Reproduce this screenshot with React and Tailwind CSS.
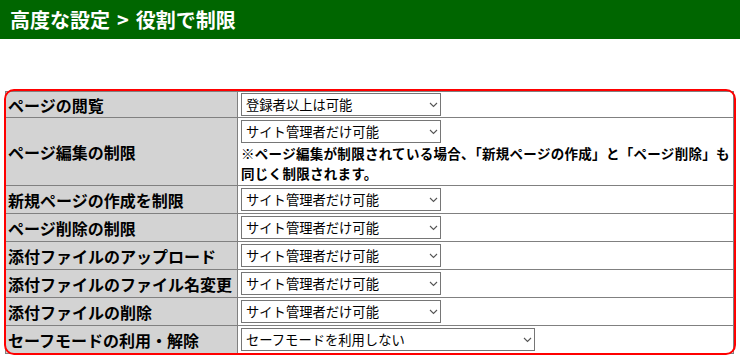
import React from 'react';

const rows = [
  { label: 'ページの閲覧', value: '登録者以上は可能', first: true },
  {
    label: 'ページ編集の制限',
    value: 'サイト管理者だけ可能',
    note: '※ページ編集が制限されている場合、「新規ページの作成」と「ページ削除」も同じく制限されます。',
  },
  { label: '新規ページの作成を制限', value: 'サイト管理者だけ可能' },
  { label: 'ページ削除の制限', value: 'サイト管理者だけ可能' },
  { label: '添付ファイルのアップロード', value: 'サイト管理者だけ可能' },
  { label: '添付ファイルのファイル名変更', value: 'サイト管理者だけ可能' },
  { label: '添付ファイルの削除', value: 'サイト管理者だけ可能' },
  { label: 'セーフモードの利用・解除', value: 'セーフモードを利用しない', wide: true },
];

const Select = ({ value, wide }) => (
  <div className={`relative ${wide ? 'w-[294px]' : 'w-[200px]'} h-[23px]`}>
    <select
      defaultValue={value}
      className="block appearance-none w-full h-full border border-[#767676] bg-white pl-[4px] pr-[20px] text-[13.3px] leading-[21px] text-black outline-none"
    >
      <option value={value}>{value}</option>
    </select>
    <svg
      className="absolute right-[3px] top-[9px] pointer-events-none"
      width="9"
      height="6"
      viewBox="0 0 9 6"
    >
      <path d="M1 1l3.5 3.5L8 1" fill="none" stroke="#555" strokeWidth="1.1" />
    </svg>
  </div>
);

export default function App() {
  return (
    <div className="w-[740px] h-[360px] bg-white font-['Noto_Sans_CJK_JP',sans-serif] overflow-hidden">
      <div className="h-[39px] bg-[#006600] flex items-center px-[10px]">
        <h1 className="text-white font-bold text-[20px] leading-none">
          高度な設定<span className="mx-[7px]">&gt;</span>役割で制限
        </h1>
      </div>

      <div className="relative mt-[50px] ml-[4px] w-[732px] h-[266px] overflow-hidden">
        <table className="mt-[2px] ml-[1px] w-[729px] table-fixed border-collapse">
          <colgroup>
            <col className="w-[232px]" />
            <col />
          </colgroup>
          <tbody>
            {rows.map((r) => (
              <tr key={r.label}>
                <td className="border border-[#808080] bg-[#d3d3d3] pl-[2px] align-middle text-[16px] font-bold leading-[20px] text-black whitespace-nowrap">
                  {r.label}
                </td>
                <td
                  className={`border border-[#808080] bg-white px-[3px] align-top ${
                    r.first ? 'py-[1px]' : 'py-[2px]'
                  }`}
                >
                  <Select value={r.value} wide={r.wide} />
                  {r.note && (
                    <p className="text-[13.5px] font-bold leading-[20px] tracking-[0.3px] text-black">
                      {r.note}
                    </p>
                  )}
                </td>
              </tr>
            ))}
          </tbody>
        </table>
        <div className="absolute left-0 top-0 w-[732px] h-[266px] border-2 border-[#ff0000] rounded-[10px] pointer-events-none" />
      </div>
    </div>
  );
}
